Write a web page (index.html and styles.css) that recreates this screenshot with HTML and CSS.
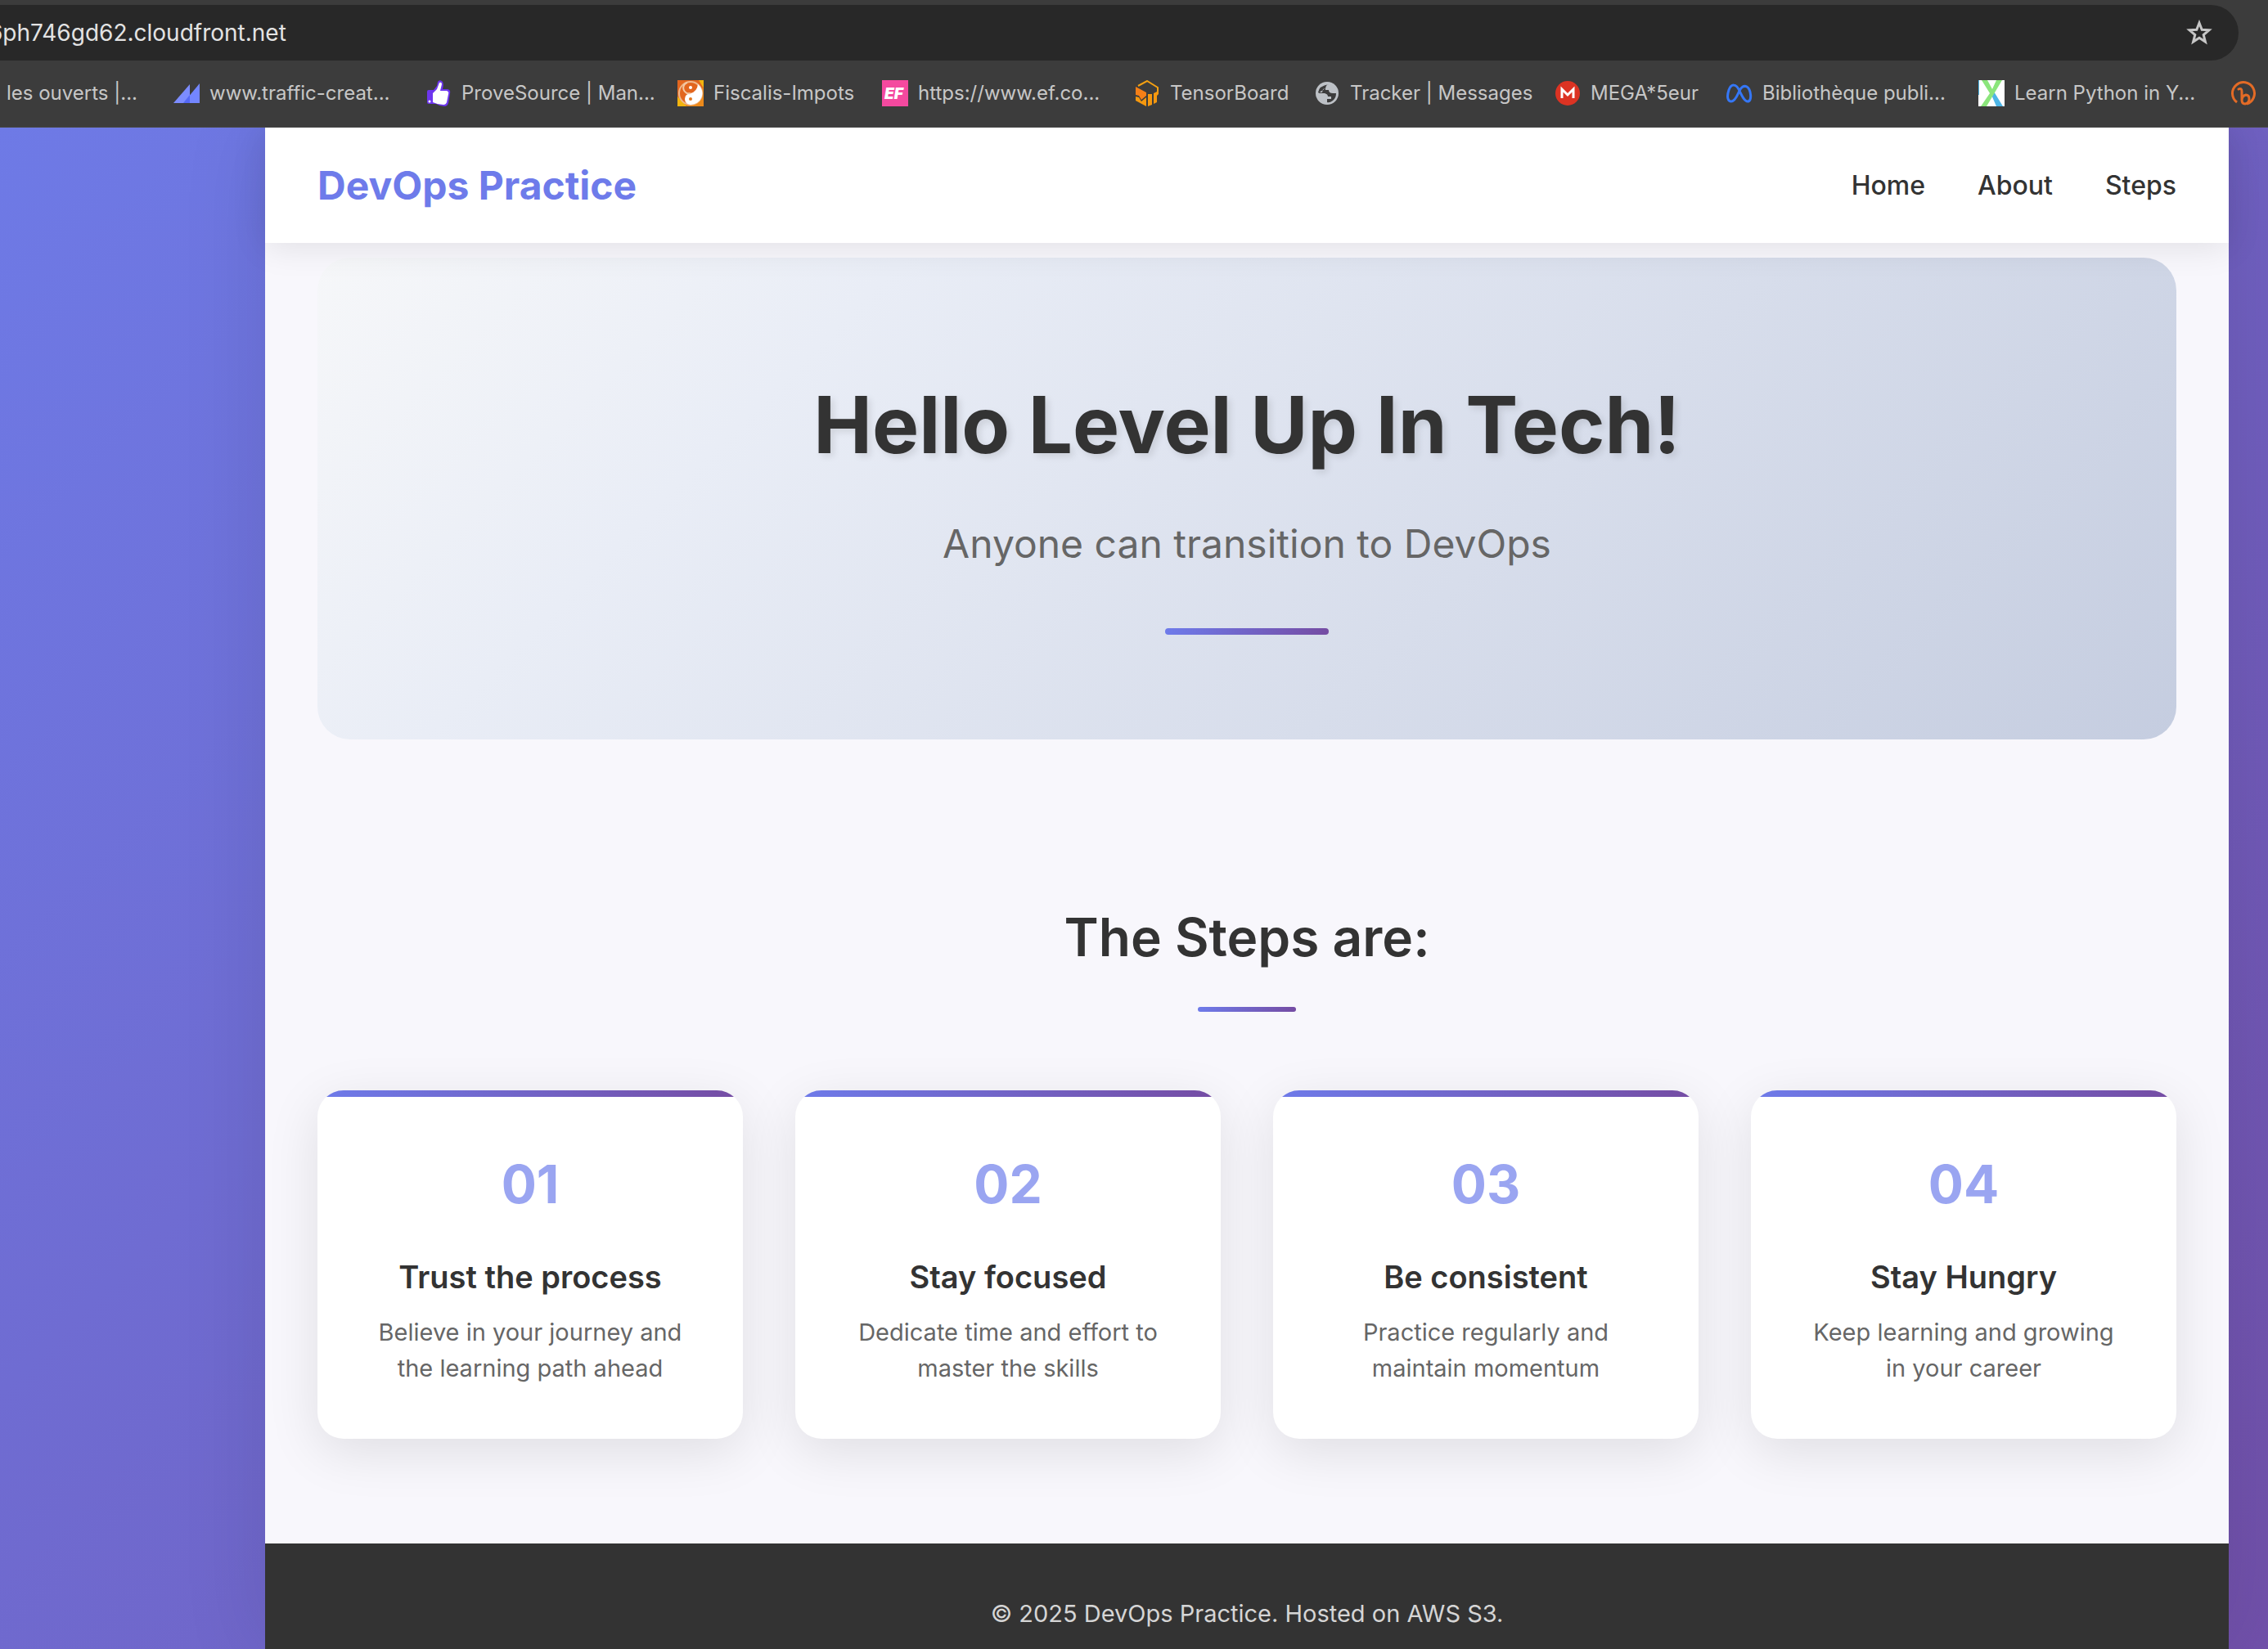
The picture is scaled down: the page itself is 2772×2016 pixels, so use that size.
FILE: index.html
```html
<!DOCTYPE html>
<html lang="en">
<head>
<meta charset="utf-8">
<title>DevOps Practice</title>
<link rel="stylesheet" href="styles.css">
</head>
<body>
<div class="browser">
  <div class="toolbar">
    <div class="address">
      <label class="address-field"><input class="address-input" type="text" value="6ph746gd62.cloudfront.net" aria-label="Address"></label>
      <button class="star" type="button" aria-label="Bookmark this page">
        <svg viewBox="0 0 32 32"><path d="M16 4l3.200 8.200 8.800.6-6.800 5.700 2.200 8.600L16 22.300 8.600 27.100l2.200-8.600L4 12.800l8.800-.6z" fill="none" stroke="#c7c7c7" stroke-width="3"/></svg>
      </button>
    </div>
  </div>
  <nav class="bookmarks" aria-label="Bookmarks">
    <a class="bookmark b0" href="#">les ouverts |...</a>
    <a class="bookmark b1" href="#"><svg viewBox="0 0 32 32"><path d="M0 28 20 5v23z" fill="#7c8cff"/><path d="M12 28 32 4v24z" fill="#7386ff"/><path d="M12 28 20 18v10z" fill="#5568f5"/></svg>www.traffic-creat...</a>
    <a class="bookmark b2" href="#"><svg viewBox="0 0 32 32"><path d="M4 12h6l4-5 1-5q2-3 5-1 3 2 1 10h6q4 1 3 5l-2 12q-1 4-5 4-5 0-10-3H4q-2 0-2-2V14q0-2 2-2z" fill="#6d35ee"/><path d="M9 16l5-5 3-8q3-1 3 2l-2 8h8q3 1 2 4l-2 10q-1 3-4 3-7 0-13-3z" fill="#fff"/><circle cx="5" cy="26" r="1.500" fill="#fff"/></svg>ProveSource | Man...</a>
    <a class="bookmark b3" href="#"><svg viewBox="0 0 32 32"><path d="M0 0h32v32H0z" fill="#e2661f"/><path d="M26 0h6v10zM0 32V20l12 12z" fill="#f2b40f"/><path d="M32 8v24H10z" fill="#ec8a1c"/><circle cx="16" cy="16" r="14" fill="#e2661f" stroke="#efb98d" stroke-width="2"/><path d="M25 5A14 14 0 0 1 16 30Q9 29 9 23T16 16Q24 14 25 5z" fill="#fff"/><path d="M12 3a6 6 0 0 0 4 13" fill="none" stroke="#f3c9a5" stroke-width="2"/><circle cx="16" cy="9" r="2" fill="#fff"/><circle cx="16" cy="23" r="2" fill="#e2761f"/></svg>Fiscalis-Impots</a>
    <a class="bookmark b4" href="#"><svg viewBox="0 0 32 32"><path d="M0 0h32v32H0z" fill="#f4499f"/><text x="3" y="23" font-size="19" font-weight="900" font-style="italic" fill="#fff">EF</text></svg>https://www.ef.co...</a>
    <a class="bookmark b5" href="#"><svg viewBox="0 0 32 32"><path d="M5 7 16 1l13 8v5" fill="none" stroke="#f4a012" stroke-width="2"/><path d="M2 8l13 7v4l-6 5-3-5-4-1z" fill="#f57f17"/><path d="M2 20l4 1 3 5 6-5v11L2 25zM17 17h5v13l-5 2zM24 16l6-3v4l-2 2v8l-4 2z" fill="#f5980f"/></svg>TensorBoard</a>
    <a class="bookmark b6" href="#"><svg viewBox="0 0 32 32"><circle cx="16" cy="16" r="14" fill="#bdc1c6"/><path d="M18 5q-3 0-4 5l-3 1-1 4H5Q6 7 18 5zM5 16h8q4 1 4 4h4v3h-5v4Q19 28 23 25t4-9h-4q-5 0-5-4h-4v-2" fill="#3c3c3c"/><path d="M5 17h8l3 4h4v2h-5v5Q6 26 5 17z" fill="#bdc1c6"/></svg>Tracker | Messages</a>
    <a class="bookmark b7" href="#"><svg viewBox="0 0 32 32"><circle cx="16" cy="16" r="15" fill="#dc3323"/><path d="M9 22V11l7 7 7-7v11" fill="none" stroke="#fff" stroke-width="3"/></svg>MEGA*5eur</a>
    <a class="bookmark b8" href="#"><svg viewBox="0 0 32 32"><path d="M16 13C12 4 6 4 3 12c-3 9-1 14 3 14 5 0 8-9 10-13s5-7 9-5c5 3 7 18 1 18-4 0-7-7-10-13z" fill="none" stroke="#3577f6" stroke-width="3"/></svg>Bibliothèque publi...</a>
    <a class="bookmark b9" href="#"><svg viewBox="0 0 32 32"><path d="M0 0h32v32H0z" fill="#fff"/><path d="M16 18l3-4 11 18h-8z" fill="#4db5e6"/><path d="M22 0h7L10 32H3L14 16 4 0h7l6 11z" fill="#8be57b"/><path d="M0 0h1v18H0z" fill="#4db5e6"/></svg>Learn Python in Y...</a>
    <a class="bookmark b10" href="#" aria-label="Bitly"><svg viewBox="0 0 32 32"><path d="M8 27A13.500 13.500 0 1 1 20 29" fill="none" stroke="#e36b26" stroke-width="3"/><path d="M10 11q4-2 4 3v10q0 5 4 5 5-1 5-6 0-5-4-5-5 1-5 7" fill="none" stroke="#e36b26" stroke-width="3" stroke-linecap="round"/></svg></a>
  </nav>
</div>
<div class="page">
  <div class="site">
    <header class="header">
      <div class="logo">DevOps Practice</div>
      <nav class="menu"><a href="#home">Home</a><a href="#about">About</a><a href="#steps">Steps</a></nav>
    </header>
    <main class="main">
      <section class="hero" id="home">
        <h1 class="hero-title">Hello Level Up In Tech!</h1>
        <p class="hero-text">Anyone can transition to DevOps</p>
        <div class="hero-rule"></div>
      </section>
      <section class="steps" id="steps">
        <h2 class="steps-title">The Steps are:</h2>
        <div class="steps-rule"></div>
        <div class="cards">
          <article class="card"><div class="number">01</div><h3 class="card-title">Trust the process</h3><p class="card-text">Believe in your journey and the learning path ahead</p></article>
          <article class="card"><div class="number">02</div><h3 class="card-title">Stay focused</h3><p class="card-text">Dedicate time and effort to master the skills</p></article>
          <article class="card"><div class="number">03</div><h3 class="card-title">Be consistent</h3><p class="card-text">Practice regularly and maintain momentum</p></article>
          <article class="card"><div class="number">04</div><h3 class="card-title">Stay Hungry</h3><p class="card-text">Keep learning and growing in your career</p></article>
        </div>
      </section>
    </main>
    <footer class="footer">© 2025 DevOps Practice. Hosted on AWS S3.</footer>
  </div>
</div>
</body>
</html>
```
FILE: styles.css
```css
* { box-sizing: border-box; margin: 0; padding: 0; }
html { height: 100%; }
body {
  display: flex;
  flex-direction: column;
  min-height: 100%;
  font-family: Inter, "Liberation Sans", sans-serif;
  color: #333;
}
a { color: inherit; text-decoration: none; }

/* Browser bar */
.browser { background: #3c3c3c; border-bottom: 1px solid #484848; }
.toolbar { padding: 6px 36px 0 0; }
.address {
  display: flex;
  align-items: center;
  height: 68px;
  padding-right: 32px;
  background: #282828;
  border-radius: 0 34px 34px 0;
}
.address-field { flex: 1; display: flex; margin-left: -14px; }
.address-input {
  flex: 1;
  border: 0;
  background: none;
  color: #e3e3e3;
  font: 28px Inter, sans-serif;
}
.star { width: 32px; height: 32px; border: 0; background: none; }
.star svg { display: block; width: 32px; height: 32px; }
.bookmarks { display: flex; height: 81px; padding: 0 0 2px 8px; overflow: hidden; }
.bookmark {
  display: flex;
  flex: none;
  align-items: center;
  gap: 12px;
  color: #c7c7c7;
  font-size: 24px;
  white-space: nowrap;
}
.bookmark svg { width: 32px; height: 32px; }
.b0 { width: 204px; }
.b1 { width: 308px; }
.b2 { width: 308px; }
.b3 { width: 250px; }
.b4 { width: 308px; }
.b5 { width: 220px; }
.b6 { width: 294px; }
.b7 { width: 210px; }
.b8 { width: 308px; }
.b9 { width: 308px; }
.b10 { width: 32px; }

/* Page */
.page {
  display: flex;
  flex: 1;
  padding: 0 48px 0 324px;
  background: linear-gradient(135deg, #6e7ae6, #7150aa);
  overflow: hidden;
}
.site {
  display: flex;
  flex: 1;
  flex-direction: column;
  background: #f8f7fc;
  box-shadow: 0 0 100px rgba(0, 0, 0, 0.1);
}
.header {
  position: relative;
  display: flex;
  align-items: center;
  justify-content: space-between;
  height: 141px;
  padding: 0 64px;
  background: #fff;
  box-shadow: 0 4px 40px rgba(0, 0, 0, 0.1);
}
.logo { color: #6e7bea; font-size: 48px; font-weight: 700; }
.menu { display: flex; gap: 64px; font-size: 32px; font-weight: 500; }
.main { padding: 18px 64px 128px; }
.hero {
  display: flex;
  flex-direction: column;
  align-items: center;
  padding: 128px 0;
  border-radius: 40px;
  background: linear-gradient(135deg, #f6f7f9 0%, #e9edf6 25%, #c5cde0 100%);
}
.hero-title {
  font-size: 96px;
  font-weight: 700;
  line-height: 152px;
  text-shadow: 4px 4px 8px rgba(0, 0, 0, 0.1);
}
.hero-text { margin-top: 32px; color: #666; font-size: 48px; line-height: 76px; }
.hero-rule {
  width: 200px;
  height: 8px;
  margin-top: 65px;
  border-radius: 4px;
  background: linear-gradient(90deg, #6e7bea, #754ca3);
}
.steps { display: flex; flex-direction: column; align-items: center; padding-top: 192px; }
.steps-title { font-size: 64px; font-weight: 600; line-height: 100px; }
.steps-rule {
  width: 120px;
  height: 6px;
  margin-top: 35px;
  border-radius: 3px;
  background: linear-gradient(90deg, #6e7bea, #754ca3);
}
.cards {
  display: grid;
  grid-template-columns: repeat(4, 1fr);
  gap: 64px;
  width: 100%;
  margin-top: 96px;
}
.card {
  padding: 64px;
  border-radius: 32px;
  background: linear-gradient(90deg, #6e7bea, #754ca3) top / 100% 8px no-repeat, #fff;
  box-shadow: 0 16px 64px rgba(0, 0, 0, 0.1);
  text-align: center;
}
.number { color: #9aa5f1; font-size: 64px; font-weight: 700; line-height: 102px; }
.card-title { margin-top: 32px; font-size: 38px; font-weight: 600; line-height: 60px; }
.card-text { margin-top: 16px; color: #666; font-size: 29px; line-height: 44px; }
.footer {
  flex: 1;
  padding: 64px 64px 20px;
  background: #333;
  color: #d5d5d5;
  font-size: 29px;
  line-height: 44px;
  text-align: center;
}
```
